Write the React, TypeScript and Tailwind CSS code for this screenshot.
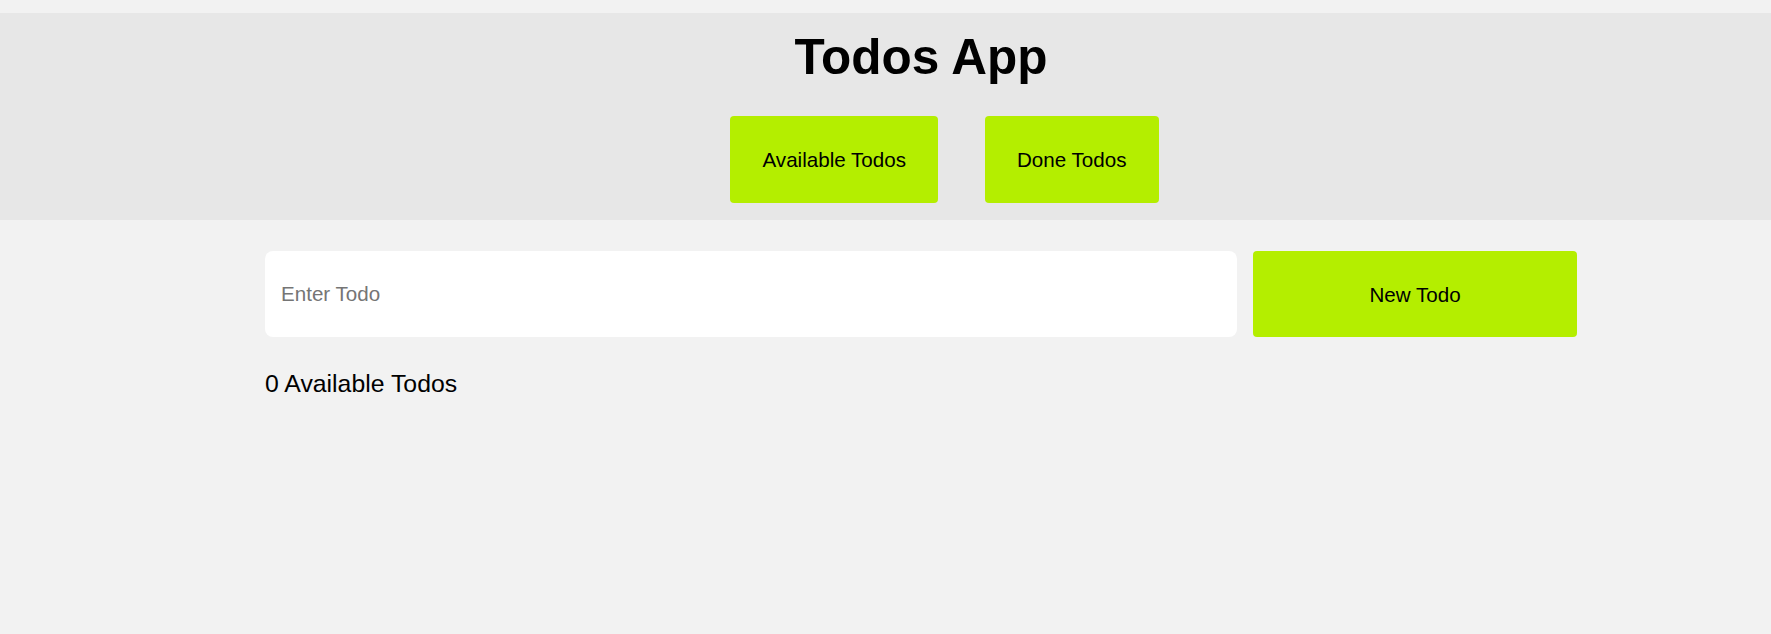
import { useState } from "react";

export default function App() {
  const [text, setText] = useState("");
  const [todos, setTodos] = useState<string[]>([]);

  function addTodo() {
    if (!text.trim()) return;
    setTodos([...todos, text.trim()]);
    setText("");
  }

  return (
    <div className="min-h-screen bg-[#f2f2f2] pt-[13px] font-['Liberation_Sans',Arial,sans-serif] text-black">
      <header className="bg-[#e7e7e7] pt-4 pb-[17px] pl-[71px]">
        <h1 className="text-center text-[49.5px] font-bold leading-[55px]">Todos App</h1>
        <nav className="mt-8 flex justify-center">
          <button className="ml-[47px] rounded bg-[#b4ee00] px-8 py-8 text-[20.6px] leading-[23px]">
            Available Todos
          </button>
          <button className="ml-[47px] rounded bg-[#b4ee00] px-8 py-8 text-[20.6px] leading-[23px]">
            Done Todos
          </button>
        </nav>
      </header>

      <main className="pl-[71px]">
        <div className="mx-auto w-[1312px] pt-[31px]">
          <div className="flex h-[86px] gap-4">
            <input
              value={text}
              onChange={(e) => setText(e.target.value)}
              placeholder="Enter Todo"
              className="w-[972px] shrink-0 rounded-lg bg-white px-4 text-[20.6px] outline-none placeholder:text-[#757575]"
            />
            <button
              onClick={addTodo}
              className="flex-1 rounded bg-[#b4ee00] text-[20.6px] leading-[23px]"
            >
              New Todo
            </button>
          </div>
          <p className="mt-[33px] text-[24.8px] leading-[28px]">{todos.length} Available Todos</p>
        </div>
      </main>
    </div>
  );
}
